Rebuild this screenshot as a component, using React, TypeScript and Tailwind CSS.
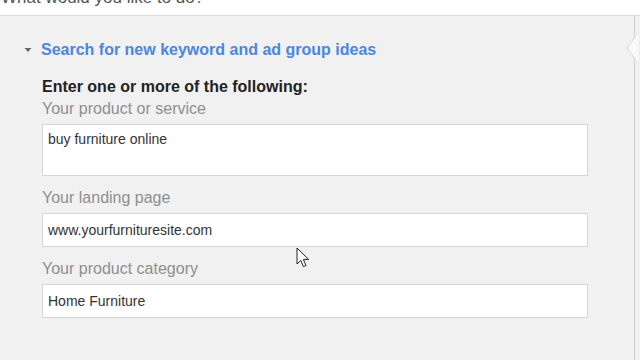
import React from 'react';

const font = { fontFamily: '"Liberation Sans", Arial, sans-serif' };

interface FieldProps {
  label: string;
  value: string;
  tall?: boolean;
}

function Field({ label, value, tall }: FieldProps): React.JSX.Element {
  return (
    <div className="flex flex-col">
      <div className="text-[16px] leading-[18px] text-[#8f8f8f]">{label}</div>
      <div
        className={`mt-[6px] w-[546px] border border-[#d6d6d6] bg-white px-[5px] text-[14px] leading-[16px] text-[#333] ${
          tall ? 'h-[52px] pt-[6px]' : 'h-[34px] flex items-center'
        }`}
      >
        {value}
      </div>
    </div>
  );
}

export default function App(): React.JSX.Element {
  return (
    <div className="relative h-[360px] w-[640px] overflow-hidden bg-white" style={font}>
      <div className="h-[16px] overflow-hidden border-b border-[#dcdcdc]">
        <div className="-mt-[14px] pl-[1px] text-[17px] leading-[24px] text-[#555]">What would you like to do?</div>
      </div>

      <div className="flex h-[344px]">
        <div className="w-[635px] border-r border-[#cfcfcf] bg-[#f1f1f1] pl-[20px] pt-[25px]">
          <div className="flex items-center">
            <svg width="8" height="6" viewBox="0 0 8 6" className="ml-[4px] mr-[9px]" aria-hidden="true">
              <path d="M0.5 1L7.5 1L4 5Z" fill="#666" />
            </svg>
            <span className="text-[16px] font-bold leading-[18px] text-[#4b87de]">
              Search for new keyword and ad group ideas
            </span>
          </div>

          <div className="ml-[22px] mt-[19px] flex flex-col">
            <div className="text-[16px] font-bold leading-[18px] text-[#222]">Enter one or more of the following:</div>
            <div className="mt-[4px] flex flex-col gap-[13px]">
              <Field label="Your product or service" value="buy furniture online" tall />
              <Field label="Your landing page" value="www.yourfurnituresite.com" />
              <Field label="Your product category" value="Home Furniture" />
            </div>
          </div>
        </div>
        <div className="flex-1 bg-[#f1f1f1]" />
      </div>

      {/* notch on the right edge */}
      <svg className="absolute left-[626px] top-[36px]" width="12" height="24" viewBox="0 0 12 24" aria-hidden="true">
        <path d="M10 0L2 12L10 24L12 24L12 0Z" fill="#fafafa" />
        <path d="M9.5 0L1.5 12L9.5 24" fill="none" stroke="#d6d6d6" strokeWidth="1" />
      </svg>

      {/* mouse pointer */}
      <svg className="absolute left-[296px] top-[247px]" width="14" height="22" viewBox="0 0 14 22" aria-hidden="true">
        <path
          d="M1 1L1 17L4.8 13.4L7.4 19.6L10 18.5L7.4 12.4L12.6 12.4Z"
          fill="#fff"
          stroke="#222"
          strokeWidth="1"
          strokeLinejoin="round"
        />
      </svg>
    </div>
  );
}
